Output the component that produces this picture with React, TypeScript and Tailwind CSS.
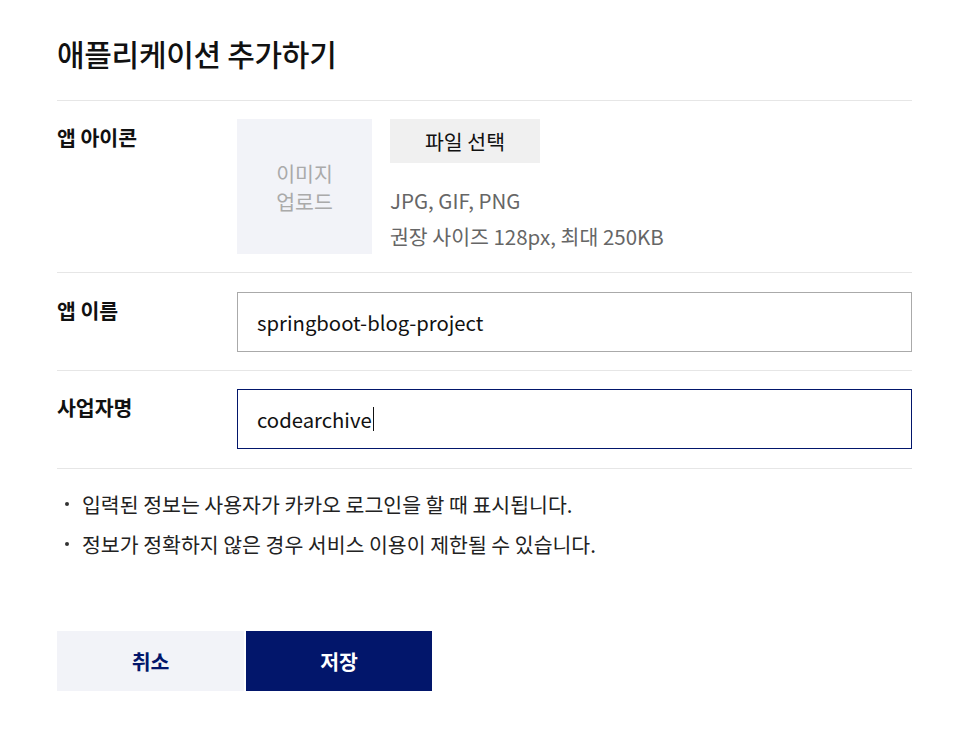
const FONT = "font-['Noto_Sans_CJK_KR','Noto_Sans',sans-serif]";

function Row({ label, pad, children }: { label: string; pad: string; children: React.ReactNode }) {
  return (
    <div className={`flex border-b border-[#e6e6e6] ${pad}`}>
      <div className="w-[180px] shrink-0 pt-[4px] text-[20.5px] font-bold leading-[28px] text-[#111]">{label}</div>
      <div className="flex-1">{children}</div>
    </div>
  );
}

export default function App() {
  return (
    <div className={`min-h-screen w-full bg-white ${FONT}`}>
      <div className="ml-[57px] w-[855px] pt-[33px]">
        <h1 className="pb-[27px] text-[30px] font-medium leading-[40px] tracking-[-0.3px] text-[#111]">
          애플리케이션 추가하기
        </h1>

        <div className="border-t border-[#e6e6e6]">
          <Row label="앱 아이콘" pad="py-[18px]">
            <div className="flex gap-[18px]">
              <div className="flex h-[135px] w-[135px] items-center justify-center bg-[#f2f3f8] text-center text-[20.5px] leading-[28px] text-[#aaaaaa]">
                이미지
                <br />
                업로드
              </div>
              <div className="flex h-[135px] flex-col">
                <button className="h-[44px] w-[150px] bg-[#f0f0f0] text-[20.5px] text-[#111]">파일 선택</button>
                <div className="mt-[19px] text-[20.5px] leading-[36px] text-[#666]">
                  <p>JPG, GIF, PNG</p>
                  <p>권장 사이즈 128px, 최대 250KB</p>
                </div>
              </div>
            </div>
          </Row>

          <Row label="앱 이름" pad="pt-[19px] pb-[18px]">
            <div className="flex h-[60px] items-center border border-[#aaaaaa] px-[19px] text-[20.3px] text-[#111]">
              springboot-blog-project
            </div>
          </Row>

          <Row label="사업자명" pad="pt-[18px] pb-[19px]">
            <div className="flex h-[60px] items-center border border-[#02166b] px-[19px] text-[20.3px] text-[#111]">
              codearchive
              <span className="ml-px inline-block h-[24px] w-px bg-[#111]" />
            </div>
          </Row>
        </div>

        <ul className="pt-[15px] text-[20.5px] leading-[40px] text-[#222]">
          <li className="flex items-center">
            <span className="ml-[8px] mr-[13px] inline-block h-[4px] w-[4px] rounded-full bg-[#333]" />
            입력된 정보는 사용자가 카카오 로그인을 할 때 표시됩니다.
          </li>
          <li className="flex items-center">
            <span className="ml-[8px] mr-[13px] inline-block h-[4px] w-[4px] rounded-full bg-[#333]" />
            정보가 정확하지 않은 경우 서비스 이용이 제한될 수 있습니다.
          </li>
        </ul>

        <div className="mt-[67px] flex gap-[2px]">
          <button className="h-[60px] w-[187px] bg-[#f2f3f8] text-[20.5px] font-bold text-[#02166b]">취소</button>
          <button className="h-[60px] w-[186px] bg-[#02166b] text-[20.5px] font-bold text-white">저장</button>
        </div>
      </div>
    </div>
  );
}
